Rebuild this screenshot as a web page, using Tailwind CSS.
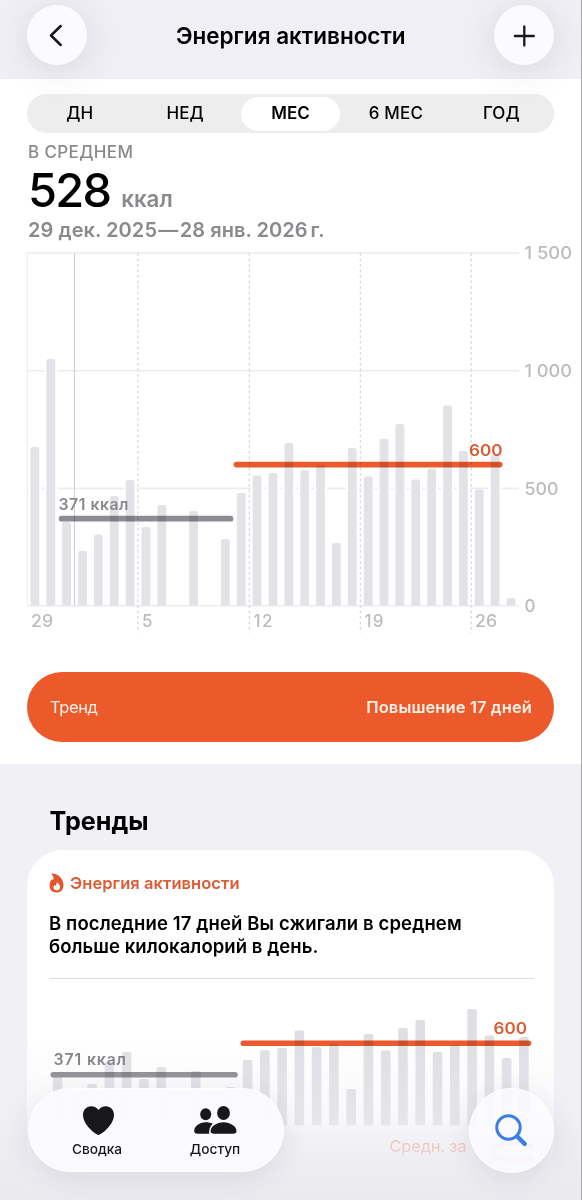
<!DOCTYPE html>
<html lang="ru">
<head>
<meta charset="utf-8">
<title>Энергия активности</title>
<script src="https://cdn.jsdelivr.net/npm/@tailwindcss/browser@4"></script>
</head>
<body class="relative h-[1200px] w-[582px] overflow-hidden border-r border-[#a9a9ac] bg-[#f1f0f5] font-[Inter,sans-serif] text-black">

<header class="relative z-10 flex h-[79px] items-start justify-between bg-[#f0eff5] pt-[5px] pr-[26.500px] pl-[27px]">
  <button class="flex size-[60px] items-center justify-center rounded-full bg-[#fafaff] shadow-[0_5px_34px_rgba(60,60,80,0.13)]">
    <svg class="size-[60px]" viewBox="0 0 60 60" fill="none" stroke="#17171c" stroke-width="2.5" stroke-linecap="round" stroke-linejoin="round"><path d="M33.700 21 L24 30.500 L33.700 40"/></svg>
  </button>
  <h1 class="pt-[16px] text-[22.500px] leading-[30px] font-semibold whitespace-nowrap">Энергия активности</h1>
  <button class="flex size-[60px] items-center justify-center rounded-full bg-[#fafaff] shadow-[0_5px_34px_rgba(60,60,80,0.13)]">
    <svg class="size-[60px]" viewBox="0 0 60 60" fill="none" stroke="#17171c" stroke-width="2.300" stroke-linecap="round"><path d="M20.800 31 H39.800 M30.300 21.500 V40.500"/></svg>
  </button>
</header>

<main>
  <section class="h-[685px] bg-white pt-[15px]">
    <nav class="mr-[27px] ml-[27px] grid h-[39px] grid-cols-5 items-center rounded-full bg-[#ededee] text-center text-[17px] font-medium">
      <span>ДН</span>
      <span>НЕД</span>
      <span class="mx-[3px] flex h-[34px] items-center justify-center rounded-full bg-white font-semibold">МЕС</span>
      <span class="tracking-[0.2px]">6 МЕС</span>
      <span>ГОД</span>
    </nav>
    <div class="h-[119px] pl-7 font-semibold text-[#8a8a8e]">
      <p class="pt-2 text-[17px] leading-[22px] font-medium tracking-[0.38px]">В СРЕДНЕМ</p>
      <p class="flex h-[56px] items-baseline gap-[11px] leading-[54px]"><span class="text-[47px] font-medium tracking-[-1.800px] text-black">528</span><span class="text-[22.300px]">ккал</span></p>
      <p class="text-[20px] leading-[22px] tracking-[0.060px] whitespace-nowrap">29 дек. 2025<span class="mx-[1.300px]">—</span>28 янв. 2026<span class="ml-[2.800px]">г.</span></p>
    </div>
    <svg id="month" class="block h-[398px] w-[581px] overflow-visible" viewBox="0 252 581 398" font-family="Inter, sans-serif">
      <g stroke="#ececee" stroke-width="1.600">
        <path d="M27 253 H519 M27 370.700 H519 M27 488.400 H519 M27 605.700 H519"/>
        <path d="M27.300 253 V606" stroke-width="1"/>
      </g>
      <path d="M74.500 253 V606" stroke="#cfcfd2" stroke-width="1.100"/>
      <path d="M137.900 253 V633 M249.300 253 V633 M360.300 253 V633 M471.200 253 V633" stroke="#d2d2d6" stroke-width="1.100" stroke-dasharray="2.750 2.750"/>
      <g class="bars"></g>
      <g stroke-width="5.800" stroke-linecap="round" class="mix-blend-multiply">
        <path d="M61.600 518.700 H230.500" stroke="#8d8c92"/>
        <path d="M236.400 464.600 H499.700" stroke="#eb5a2d"/>
      </g>
      <g font-weight="600" font-size="15.800">
        <text x="58.500" y="509.600" textLength="70" fill="#8a8a8e">371 ккал</text>
        <text x="469" y="455.600" textLength="33.500" lengthAdjust="spacingAndGlyphs" fill="#dd5c34">600</text>
      </g>
      <g font-weight="500" font-size="17" fill="#bcbcc0">
        <text x="524.500" y="259.300" textLength="47.500" lengthAdjust="spacingAndGlyphs">1 500</text>
        <text x="524.500" y="377" textLength="47.500" lengthAdjust="spacingAndGlyphs">1 000</text>
        <text x="524.500" y="494.500" textLength="34" lengthAdjust="spacingAndGlyphs">500</text>
        <text x="524.500" y="611.700">0</text>
        <text x="31" y="627" textLength="22" lengthAdjust="spacingAndGlyphs">29</text>
        <text x="142" y="627">5</text>
        <text x="253.500" y="627" textLength="19">12</text>
        <text x="364.500" y="627" textLength="19">19</text>
        <text x="475" y="627" textLength="22" lengthAdjust="spacingAndGlyphs">26</text>
      </g>
    </svg>
    <div class="mx-[27px] mt-[22px] flex h-[70px] items-center justify-between rounded-full bg-[#ec5a2c] pr-[22px] pl-[23px] text-[16.500px] text-[#fff1e6]">
      <span class="tracking-[-0.4px]">Тренд</span>
      <span class="font-semibold tracking-[0.100px]">Повышение 17 дней</span>
    </div>
  </section>

  <section class="px-[27px] pt-[41px]">
    <h2 class="pl-[22.500px] text-[25.200px] leading-[32px] font-bold">Тренды</h2>
    <article class="mt-[13px] h-[370px] rounded-[36px] bg-white px-[22px] pt-[22px]">
      <div class="flex h-[22px] items-center gap-1.5 text-[16.500px] font-semibold text-[#dd5c34]">
        <svg class="h-[20px] w-[15px] shrink-0" viewBox="0 0 15 20"><path fill="#e4552a" d="M3.200 .5 C8 .3 14.500 5 14.500 12 C14.500 17 11.500 19.500 7.500 19.500 C3.300 19.500 .6 16.800 .6 12.800 C.6 10.500 1.200 8.600 2.200 7.100 C2.800 6.300 3.800 6.500 4.200 7.300 C4.900 5.300 4.400 3 2.900 1.600 C2.300 1.100 2.500 .5 3.200 .5 Z"/><path fill="#fff" d="M7.800 9.300 C10 10.600 11 12.300 11 14.200 C11 16.200 9.700 17.300 7.800 17.300 C5.700 17.300 4.500 16 4.500 14.200 C4.500 13.300 4.700 12.500 5.200 11.900 C5.800 12.100 6.200 12.600 6.400 13.200 C7.300 12 7.800 10.700 7.800 9.300 Z"/></svg>
        <span class="tracking-[0.060px] whitespace-nowrap">Энергия активности</span>
      </div>
      <p class="mt-[18px] text-[18.500px] leading-[23px] font-semibold tracking-[0.120px] whitespace-nowrap">В последние 17 дней Вы сжигали в среднем<br><span class="tracking-[0.050px]">больше килокалорий в день.</span></p>
      <hr class="mt-[20px] -mr-[2px] border-[#dededf]">
      <svg id="trend" class="block h-[190px] w-[484px]" viewBox="49 979 484 190" font-family="Inter, sans-serif">
        <g class="bars"></g>
        <g stroke-width="5.600" stroke-linecap="round" class="mix-blend-multiply">
          <path d="M53.300 1074.700 H235" stroke="#7f7e84"/>
          <path d="M243.300 1043.300 H528.500" stroke="#ea5325"/>
        </g>
        <g font-weight="600" font-size="15.800">
          <text x="53.500" y="1064.800" textLength="72.500" fill="#77777b">371 ккал</text>
          <text x="493.500" y="1033.800" textLength="33.500" lengthAdjust="spacingAndGlyphs" fill="#dd5c34">600</text>
        </g>
        <text x="389.500" y="1152" textLength="77" font-size="16.500" fill="#ee4310">Средн. за</text>
        <ellipse cx="514" cy="1152" rx="22" ry="9" fill="none" stroke="#f5741f" stroke-width="5"/>
      </svg>
    </article>
  </section>
</main>

<!-- Fade behind the floating tab bar -->
<div class="absolute bottom-0 left-0 h-[165px] w-[581px] bg-linear-to-b from-[#efeef3]/0 via-[#efeef3]/45 via-55% to-[#e9e8ed]/70 to-100%"></div>
<div class="absolute bottom-0 left-0 h-[80px] w-[581px] bg-linear-to-b from-[#efeef3]/0 via-[#eeedf2]/50 via-20% to-[#ebeaef] to-100%"></div>

<footer class="absolute top-[1088px] left-[28px] flex w-[526px] justify-between">
  <nav class="flex h-[84px] w-[256px] rounded-full border border-white bg-[#fafaff]/95 pl-[11px] text-[13.700px] font-medium text-[#17171c] shadow-[0_6px_28px_rgba(50,50,80,0.10)]">
    <a class="flex w-[114px] flex-col items-center pt-[16px]">
      <svg class="h-[31px] w-[33px] translate-x-px" viewBox="0 0 33 31"><path fill="#17171c" d="M16.500 30 C14.500 30 1 20.500 1 9.800 C1 4.800 4.500 1.200 9 1.200 C12.300 1.200 15 2.800 16.500 5 C18 2.800 20.700 1.200 24 1.200 C28.500 1.200 32 4.800 32 9.800 C32 20.500 18.500 30 16.500 30 Z"/></svg>
      <span class="mt-[4px] leading-[18px]">Сводка</span>
    </a>
    <a class="flex w-[122px] flex-col items-center pt-[16px]">
      <svg class="h-[31px] w-[44px]" viewBox="0 0 44 31" fill="#17171c"><ellipse cx="12.700" cy="9.200" rx="5.500" ry="6"/><ellipse cx="30.500" cy="8" rx="6.400" ry="6.900"/><path d="M19.700 18.800 C17 21.500 15.800 24.500 16.200 28.700 H4.500 C2 28.700 1.200 27.500 1.200 25.800 C1.200 21.800 6 17.300 12.700 17.300 C15.400 17.300 17.800 17.800 19.700 18.800 Z"/><path d="M30.500 17.300 C37.500 17.300 43.500 21.800 43.500 26 C43.500 27.800 42.500 28.700 40 28.700 H21 C18.500 28.700 17.600 27.800 17.600 26 C17.600 21.800 23.500 17.300 30.500 17.300 Z"/></svg>
      <span class="mt-[4px] leading-[18px]">Доступ</span>
    </a>
  </nav>
  <button class="size-[85px] rounded-full border border-white bg-[#fcfbff]/85 shadow-[0_6px_28px_rgba(50,50,80,0.10)]">
    <svg class="size-[83px]" viewBox="0 0 82 82" fill="none" stroke="#3b7fe4" stroke-linecap="round"><circle cx="38" cy="38" r="11.600" stroke-width="2.900"/><path d="M46.700 47 L54 54.200" stroke-width="4.300"/></svg>
  </button>
</footer>

<script>
  // Bar tops by day; null marks a day without data
  const month = [447,359,521.7,551,534.5,496,480,527,505,null,511,null,539,493,475.5,473,443,470,465,543,448,476.5,438.7,424,479.5,468.5,405.5,451,489.5,455,598];
  const trend = [1077,1093,1084,1062,1052,1079,1067,null,1071,null,1087,1060,1050,1048,1030.5,1047,1044,1089,1034,1050.5,1028,1020,1052,1045,1009,1035.5,1058,1037];
  function draw(id, tops, x0, step, w, base, fill) {
    const g = document.querySelector('#' + id + ' .bars');
    let s = '';
    tops.forEach((t, i) => {
      if (t === null) return;
      const x = x0 + i * step - w / 2;
      s += `<rect x="${x - 2}" y="${t}" width="${w + 4}" height="${base - t - 1}" fill="#fff"/>`;
    });
    tops.forEach((t, i) => {
      if (t === null) return;
      const l = x0 + i * step - w / 2, r = l + w;
      s += `<path fill="${fill}" d="M${l} ${base} V${t + 2} Q${l} ${t} ${l + 2} ${t} H${r - 2} Q${r} ${t} ${r} ${t + 2} V${base} Z"/>`;
    });
    g.innerHTML = s;
  }
  draw('month', month, 34.9, 15.87, 8.8, 605.5, '#e3e2e7');
  draw('trend', trend, 57.6, 17.27, 9.6, 1125.5, '#dfdee3');
</script>
</body>
</html>
